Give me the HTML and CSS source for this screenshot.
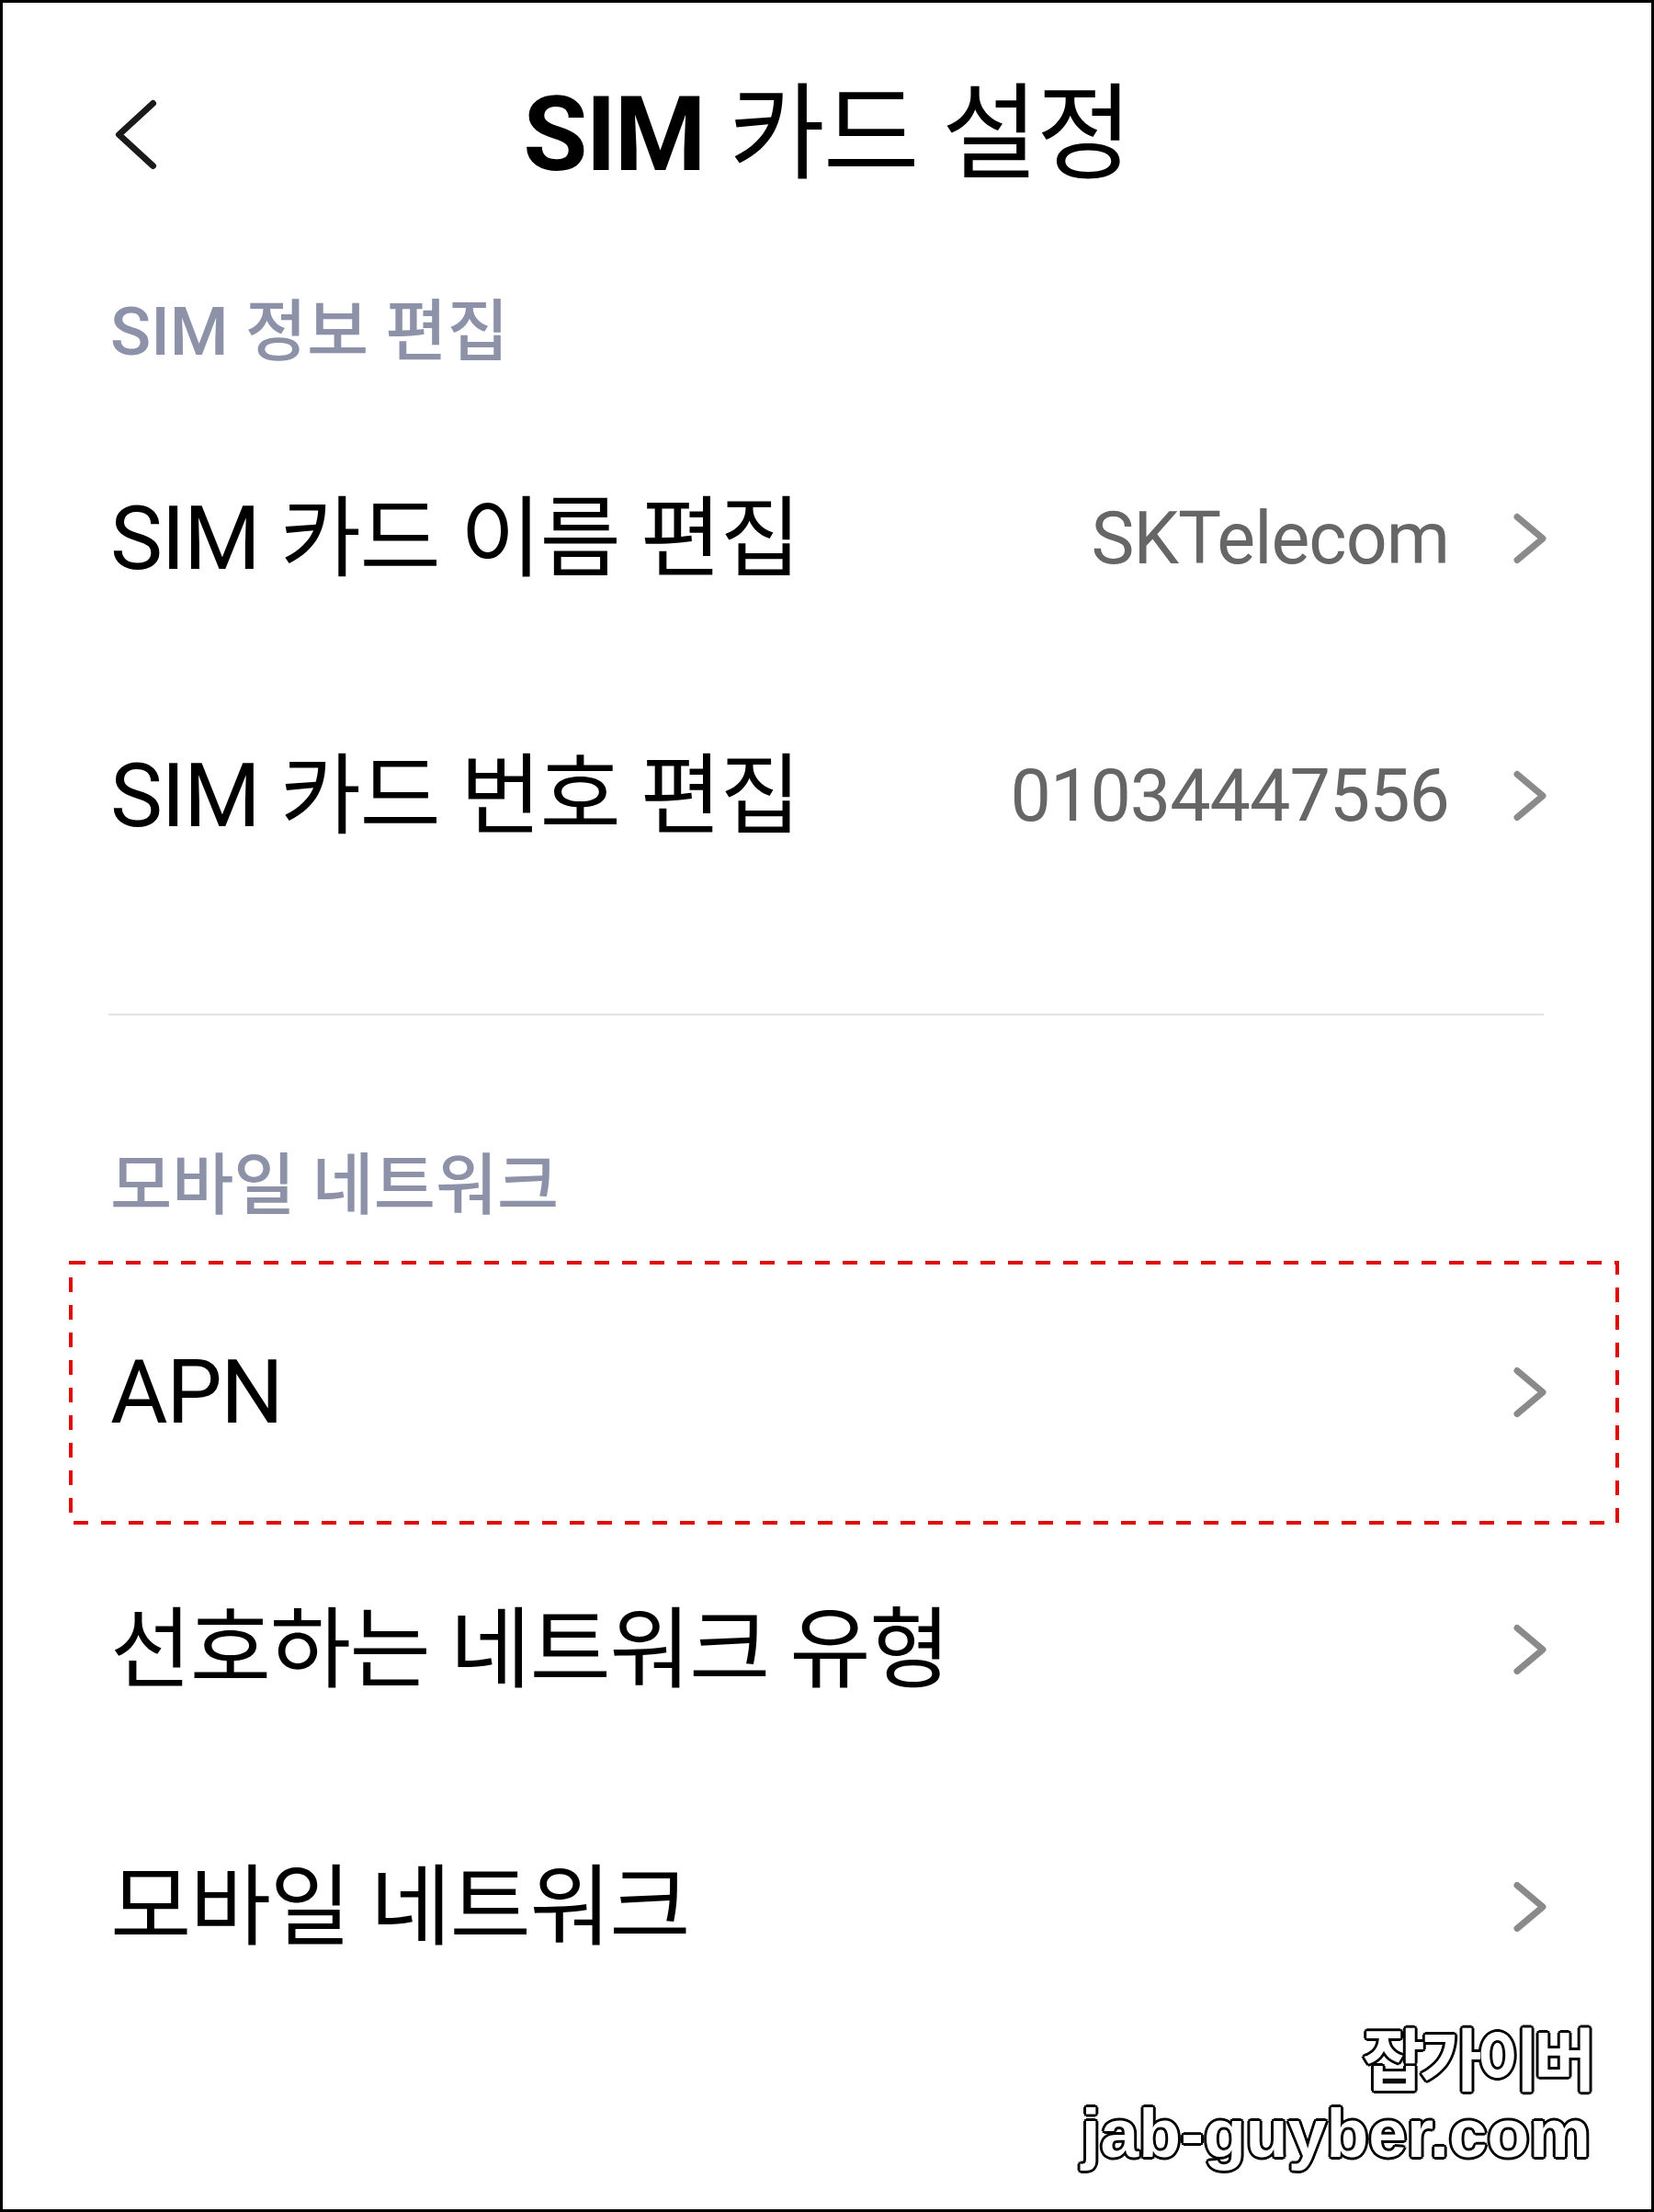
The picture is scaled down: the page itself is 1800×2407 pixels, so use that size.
FILE: index.html
```html
<!DOCTYPE html>
<html lang="ko">

<head>
    <meta charset="UTF-8">
    <meta name="viewport" content="width=device-width, initial-scale=1.0">
    <title>SIM 카드 설정</title>

    <link rel="stylesheet" href="styles.css">
</head>

<body>
    <div class="screen">
        <div class="topbar">
            <svg class="back" viewBox="0 0 60 90">
                <path d="M46.5 11.5 L9.5 45.5 L46.5 79.5" />
            </svg>
            <h1 class="title">SIM <span class="ko">카드 설정</span></h1>
            <span></span>
        </div>

        <section class="group">
            <h2 class="group-title">SIM 정보 편집</h2>
            <div class="row">
                <span class="label">SIM 카드 이름 편집</span>
                <span class="value">SKTelecom</span>
                <svg class="arrow" viewBox="0 0 40 60"><path d="M6 6.5 L34 30 L6 53.5" /></svg>
            </div>
            <div class="row">
                <span class="label">SIM 카드 번호 편집</span>
                <span class="value">01034447556</span>
                <svg class="arrow" viewBox="0 0 40 60"><path d="M6 6.5 L34 30 L6 53.5" /></svg>
            </div>
        </section>

        <div class="divider"></div>

        <section class="group">
            <h2 class="group-title">모바일 네트워크</h2>
            <div class="row">
                <span class="label">APN</span>
                <svg class="arrow" viewBox="0 0 40 60"><path d="M6 6.5 L34 30 L6 53.5" /></svg>
                <!-- 빨간 점선 표시 -->
                <svg class="mark" viewBox="0 0 1687 287">
                    <rect x="2" y="2" width="1683" height="283" />
                </svg>
            </div>
            <div class="row">
                <span class="label">선호하는 네트워크 유형</span>
                <svg class="arrow" viewBox="0 0 40 60"><path d="M6 6.5 L34 30 L6 53.5" /></svg>
            </div>
            <div class="row">
                <span class="label">모바일 네트워크</span>
                <svg class="arrow" viewBox="0 0 40 60"><path d="M6 6.5 L34 30 L6 53.5" /></svg>
            </div>
        </section>

        <div class="watermark">
            <div class="wm-ko">잡가이버</div>
            <div class="wm-en">jab-guyber.com</div>
        </div>
    </div>
</body>

</html>
```

FILE: styles.css
```css
* {
    margin: 0;
    padding: 0;
    box-sizing: border-box;
}

body {
    background: #ffffff;
    font-family: Roboto, "Noto Sans CJK KR", sans-serif;
    color: #000000;
}

.screen {
    width: 1800px;
    height: 2407px;
    border: 3px solid #000000;
    position: relative;
    overflow: hidden;
}

/* 상단 타이틀 */
.topbar {
    height: 286px;
    display: grid;
    grid-template-columns: 1fr auto 1fr;
    align-items: center;
}

.back {
    width: 60px;
    height: 90px;
    margin-left: 117px;
}

.back path {
    fill: none;
    stroke: #1a1a1a;
    stroke-width: 7;
    stroke-linecap: round;
    stroke-linejoin: round;
}

.title {
    font-size: 114px;
    font-weight: 700;
    line-height: 1;
    letter-spacing: -2px;
    white-space: nowrap;
}

.title .ko {
    font-weight: 400;
    font-feature-settings: "palt";
}

/* 그룹 */
.group-title {
    padding: 36px 0 48px 117px;
    font-size: 73px;
    font-weight: 500;
    line-height: 1;
    color: #8d92a9;
    font-feature-settings: "palt";
}

.row {
    height: 280px;
    display: flex;
    align-items: center;
    padding: 0 112px 0 117px;
    position: relative;
}

.label {
    flex: 1;
    font-size: 96px;
    line-height: 1;
    letter-spacing: -1.5px;
    font-feature-settings: "palt";
    white-space: nowrap;
}

.value {
    font-size: 79px;
    line-height: 1;
    letter-spacing: -1px;
    color: #666666;
    margin-right: 68px;
}

.arrow {
    width: 40px;
    height: 60px;
}

.arrow path {
    fill: none;
    stroke: #8a8a8a;
    stroke-width: 7;
    stroke-linecap: round;
    stroke-linejoin: round;
}

.divider {
    height: 2px;
    background: #e3e3e3;
    margin: 97px 117px 113px 115px;
}

.mark {
    position: absolute;
    left: 72px;
    top: -3px;
    width: 1687px;
    height: 287px;
}

.mark rect {
    fill: none;
    stroke: #e00a0a;
    stroke-width: 4;
    stroke-dasharray: 16 14;
}

/* 워터마크 */
.watermark {
    position: absolute;
    right: 66px;
    top: 2197px;
    text-align: right;
    color: #ffffff;
    font-weight: 700;
    text-shadow: 3px 0 #000, -3px 0 #000, 0 3px #000, 0 -3px #000,
        2px 2px #000, -2px 2px #000, 2px -2px #000, -2px -2px #000;
}

.wm-ko {
    font-family: "Noto Sans CJK KR", sans-serif;
    font-size: 74px;
    line-height: 1;
    letter-spacing: -6px;
}

.wm-en {
    font-family: "Liberation Sans", Arial, sans-serif;
    font-size: 75px;
    line-height: 1;
    margin-top: 10px;
}
```
